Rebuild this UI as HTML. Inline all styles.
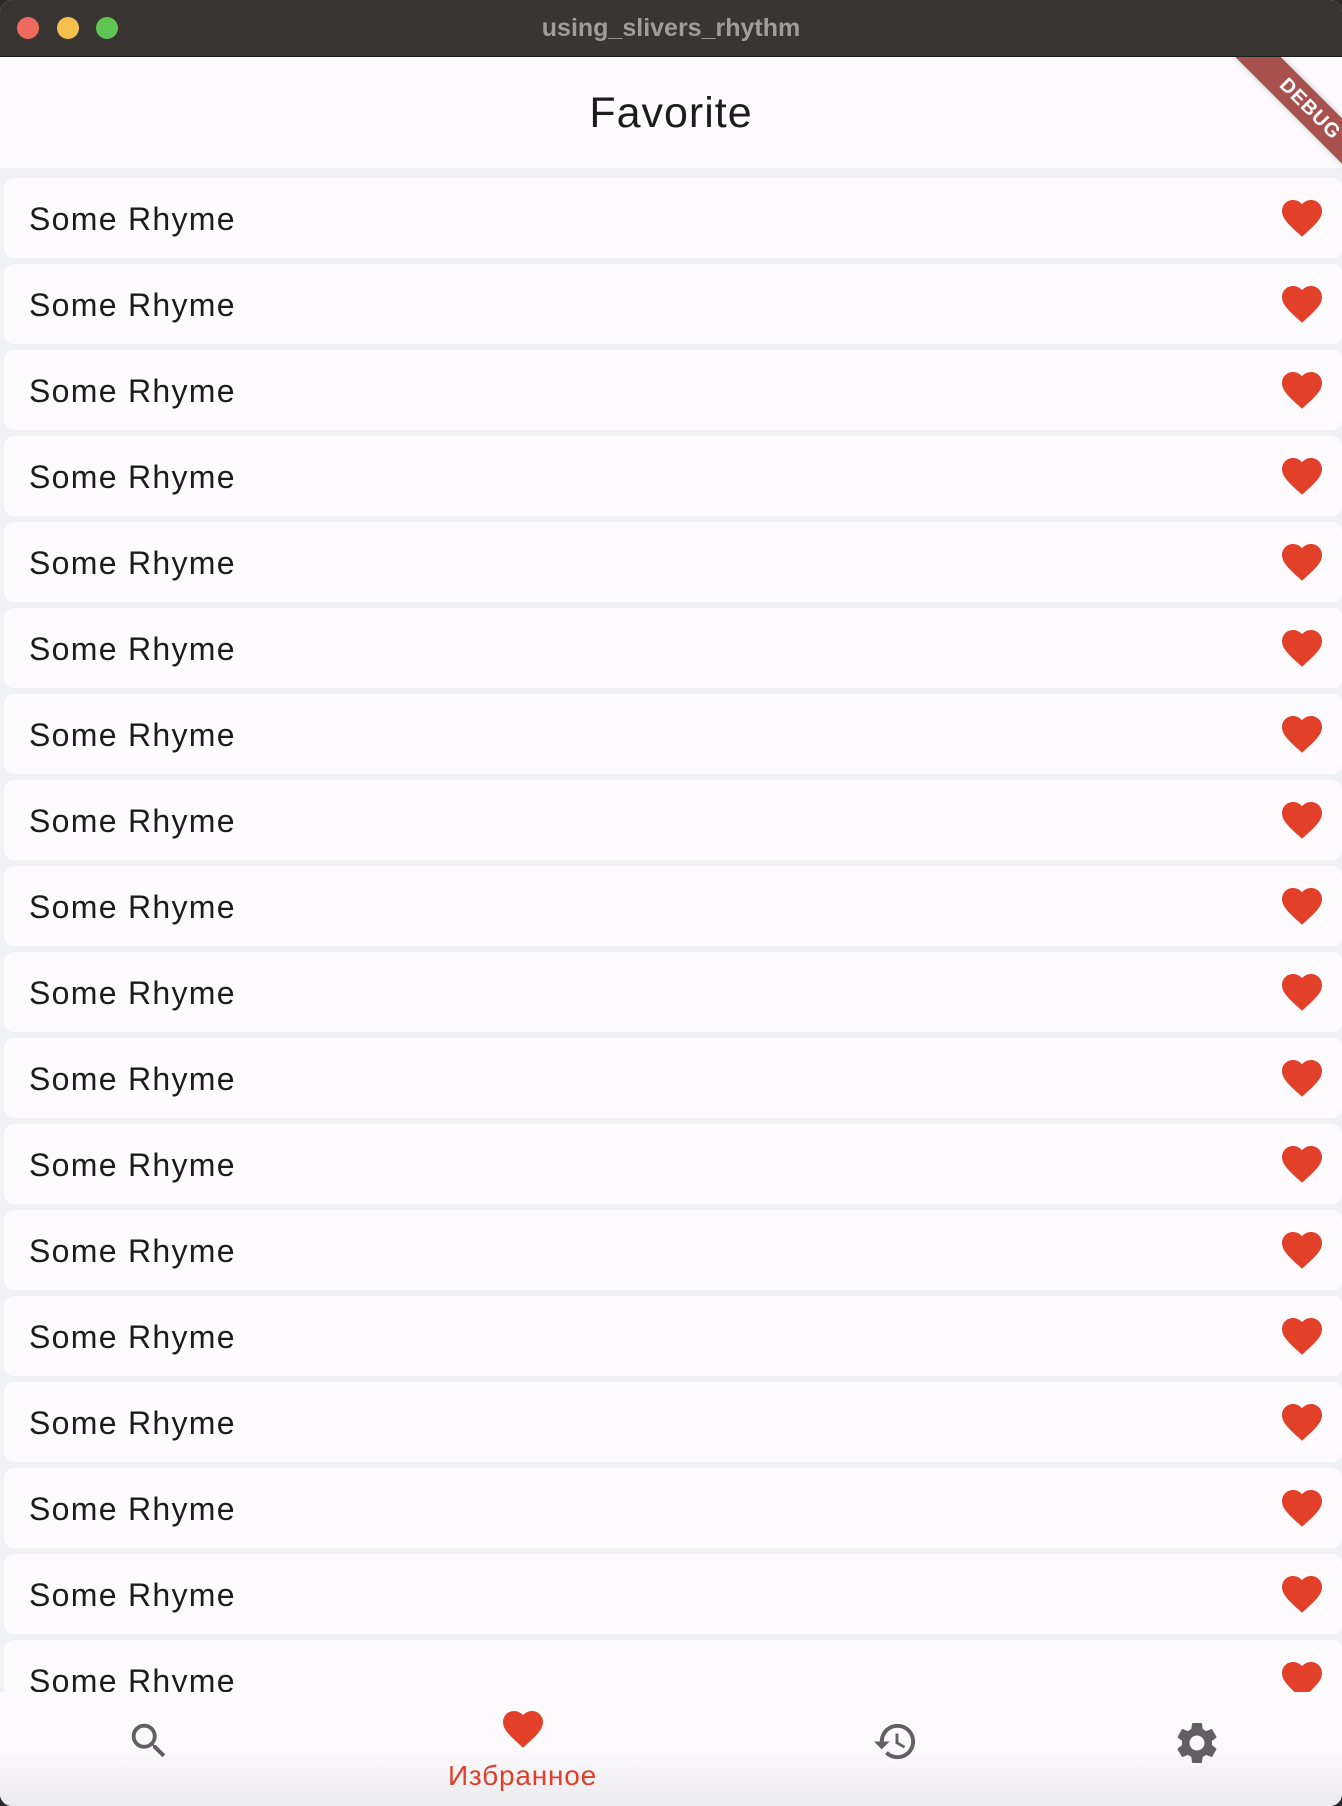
<!DOCTYPE html>
<html><head><meta charset="utf-8">
<style>
*{margin:0;padding:0;box-sizing:border-box}
html,body{width:1342px;height:1806px;overflow:hidden;background:#2a2a2a}
#win{position:absolute;left:0;top:0;width:1342px;height:1806px;border-radius:12px;overflow:hidden;background:#f0f1f3}
#tb{position:absolute;left:0;top:0;width:1342px;height:57px;background:#383533;border-bottom:1px solid #1e1e1e;z-index:3}
.dot{position:absolute;top:17px;width:22px;height:22px;border-radius:50%}
#tt{position:absolute;left:0;width:1342px;top:14px;text-align:center;font:bold 25px "Liberation Sans",sans-serif;color:#9f9d9c}
#ab{position:absolute;left:0;top:57px;width:1342px;height:111px;background:#fdfbfe}
#ab span{position:absolute;left:0;width:1342px;top:56px;text-align:center;font:43px "Liberation Sans",sans-serif;line-height:0;letter-spacing:1px;color:#1c1b1f}
.card{position:absolute;left:4px;width:1338px;height:80px;background:#fdfbfe;border-radius:10px}
.card span{position:absolute;left:25px;top:41px;font:32px "Liberation Sans",sans-serif;line-height:0;letter-spacing:1.3px;color:#1c1b1f}
.card svg{position:absolute;left:1274px;top:16px}
#nav{position:absolute;left:0;top:1692px;width:1342px;height:114px;background:linear-gradient(#fdfbfe 0%,#fbf9fc 50%,#ebeaed 100%)}
#lbl{position:absolute;left:440px;width:165px;text-align:center;top:1776px;font:28px "Liberation Sans",sans-serif;line-height:0;letter-spacing:.8px;color:#e0402a}
#bclip{position:absolute;left:1142px;top:57px;width:200px;height:200px;overflow:hidden;z-index:2}
#dbg{position:absolute;left:78px;top:36px;width:180px;height:32px;background:#a8514f;transform:rotate(45deg);transform-origin:center;color:#fff;font:bold 20px "Liberation Sans",sans-serif;text-align:center;line-height:32px;letter-spacing:1px;box-shadow:0 0 6px rgba(0,0,0,.25)}
</style></head><body>
<div id="win">
<div id="tb">
<div class="dot" style="left:17px;background:#ee6a5e"></div>
<div class="dot" style="left:57px;background:#f5bf4f"></div>
<div class="dot" style="left:96px;background:#61c554"></div>
<div id="tt">using_slivers_rhythm</div>
</div>
<div id="ab"><span>Favorite</span></div>
<div id="list"></div>
<div id="nav"></div>
<svg style="position:absolute;left:126px;top:1718px" width="46" height="46" viewBox="0 0 24 24"><path fill="#625f63" d="M15.5 14h-.79l-.28-.27C15.41 12.59 16 11.11 16 9.5 16 5.91 13.09 3 9.5 3S3 5.91 3 9.5 5.91 16 9.5 16c1.61 0 3.09-.59 4.23-1.57l.27.28v.79l5 4.99L20.49 19l-4.99-5zm-6 0C7.01 14 5 11.99 5 9.5S7.01 5 9.5 5 14 7.01 14 9.5 11.99 14 9.5 14z"/></svg>
<svg style="position:absolute;left:499px;top:1705px" width="48" height="48" viewBox="0 0 24 24"><path fill="#e3402a" d="M12 21.35l-1.45-1.32C5.4 15.36 2 12.28 2 8.5 2 5.42 4.42 3 7.5 3c1.74 0 3.41.81 4.5 2.09C13.09 3.81 14.76 3 16.5 3 19.58 3 22 5.42 22 8.5c0 3.78-3.4 6.86-8.55 11.54L12 21.35z"/></svg>
<div id="lbl">Избранное</div>
<svg style="position:absolute;left:872px;top:1718px" width="47" height="47" viewBox="0 0 24 24"><path fill="#625f63" d="M13 3c-4.97 0-9 4.03-9 9H1l3.89 3.89.07.14L9 12H6c0-3.87 3.130-7 7-7s7 3.13 7 7-3.13 7-7 7c-1.93 0-3.68-.79-4.94-2.06l-1.42 1.42C8.27 19.99 10.51 21 13 21c4.97 0 9-4.03 9-9s-4.03-9-9-9zm-1 5v5l4.28 2.54.72-1.21-3.5-2.08V8H12z"/></svg>
<svg style="position:absolute;left:1172px;top:1718px" width="50" height="50" viewBox="0 0 24 24"><path fill="#625f63" d="M19.14 12.94c.04-.3.06-.61.06-.94 0-.32-.02-.64-.07-.94l2.03-1.58c.18-.14.23-.41.12-.61l-1.92-3.32c-.12-.22-.37-.29-.59-.22l-2.39.96c-.5-.38-1.03-.7-1.62-.94l-.36-2.54c-.04-.24-.24-.41-.48-.41h-3.84c-.24 0-.43.17-.47.41l-.36 2.54c-.59.24-1.13.57-1.62.94l-2.39-.96c-.22-.08-.47 0-.59.22L2.74 8.87c-.12.21-.08.47.12.61l2.03 1.58c-.05.3-.09.63-.09.94s.02.64.07.94l-2.03 1.58c-.18.14-.23.41-.12.61l1.92 3.32c.12.22.37.29.59.22l2.39-.96c.5.38 1.03.7 1.62.94l.36 2.54c.05.24.24.41.48.41h3.84c.24 0 .44-.17.47-.41l.36-2.54c.59-.24 1.13-.56 1.62-.94l2.39.96c.22.08.47 0 .59-.22l1.92-3.32c.12-.22.07-.47-.12-.61l-2.01-1.58zM12 15.6c-1.98 0-3.6-1.62-3.6-3.6s1.62-3.6 3.6-3.6 3.6 1.62 3.6 3.6-1.62 3.6-3.6 3.6z"/></svg>
<div id="bclip"><div id="dbg">DEBUG</div></div>
</div>
<script>
var h='';
for(var i=0;i<18;i++){
h+='<div class="card" style="top:'+(178+i*86)+'px"><span>Some Rhyme</span><svg width="48" height="48" viewBox="0 0 24 24"><path fill="#e3402a" d="M12 21.35l-1.45-1.32C5.4 15.36 2 12.28 2 8.5 2 5.42 4.42 3 7.5 3c1.74 0 3.41.81 4.5 2.09C13.09 3.81 14.76 3 16.5 3 19.58 3 22 5.42 22 8.5c0 3.78-3.4 6.86-8.55 11.54L12 21.35z"/></svg></div>';
}
document.getElementById('list').innerHTML=h;
</script>
</body></html>
